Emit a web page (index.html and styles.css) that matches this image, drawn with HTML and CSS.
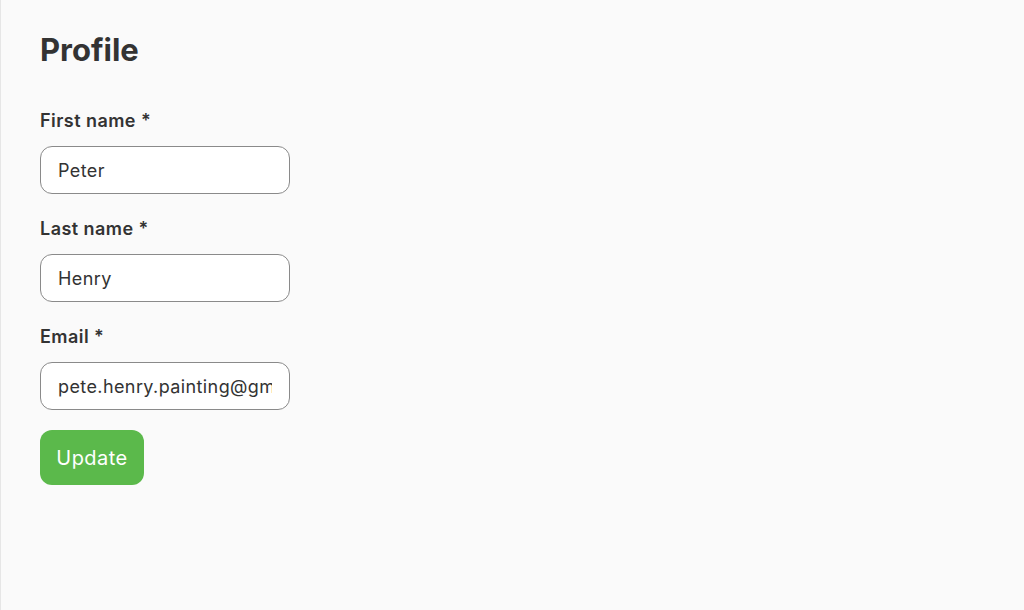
FILE: index.html
```html
<!DOCTYPE html>
<html lang="en">
<head>
<meta charset="utf-8">
<title>Profile</title>
<link rel="stylesheet" href="styles.css">
</head>
<body>
<main class="page">
  <h1 class="title">Profile</h1>
  <form class="form">
    <div class="field">
      <label class="label" for="first">First name *</label>
      <input class="input" id="first" type="text" value="Peter">
    </div>
    <div class="field">
      <label class="label" for="last">Last name *</label>
      <input class="input" id="last" type="text" value="Henry">
    </div>
    <div class="field field-last">
      <label class="label" for="email">Email *</label>
      <input class="input" id="email" type="text" value="pete.henry.painting@gmail.com">
    </div>
    <button class="button" type="button">Update</button>
  </form>
</main>
</body>
</html>
```

FILE: styles.css
```css
html, body {
  margin: 0;
  height: 100%;
}
body {
  background: #fafafa;
  font-family: Inter, "Noto Sans", sans-serif;
  color: #333;
  border-left: 1px solid #e6e6e6;
  box-sizing: border-box;
}
.page {
  padding: 31px 39px;
}
.title {
  margin: 0 0 41px;
  font-size: 31px;
  font-weight: 700;
  line-height: 37.5px;
}
.form {
  display: flex;
  flex-direction: column;
  align-items: flex-start;
}
.field {
  display: flex;
  flex-direction: column;
  margin-bottom: 24px;
}
.field-last {
  margin-bottom: 20px;
}
.label {
  font-size: 18px;
  font-weight: 600;
  line-height: 22px;
  letter-spacing: 0.45px;
  margin-bottom: 14px;
}
.input {
  box-sizing: border-box;
  width: 250px;
  height: 48px;
  border: 1px solid #8a8a8a;
  border-radius: 12px;
  padding: 2px 17px 0;
  background: #fff;
  font-family: inherit;
  font-size: 18px;
  letter-spacing: 0.4px;
  color: #333;
  outline: none;
}
.button {
  box-sizing: border-box;
  width: 104px;
  height: 55px;
  padding: 2px 0 0;
  border: none;
  border-radius: 12px;
  background: #5bb94b;
  color: #fff;
  font-family: inherit;
  font-size: 20px;
  font-weight: 400;
  letter-spacing: 0.45px;
  cursor: pointer;
}
```
